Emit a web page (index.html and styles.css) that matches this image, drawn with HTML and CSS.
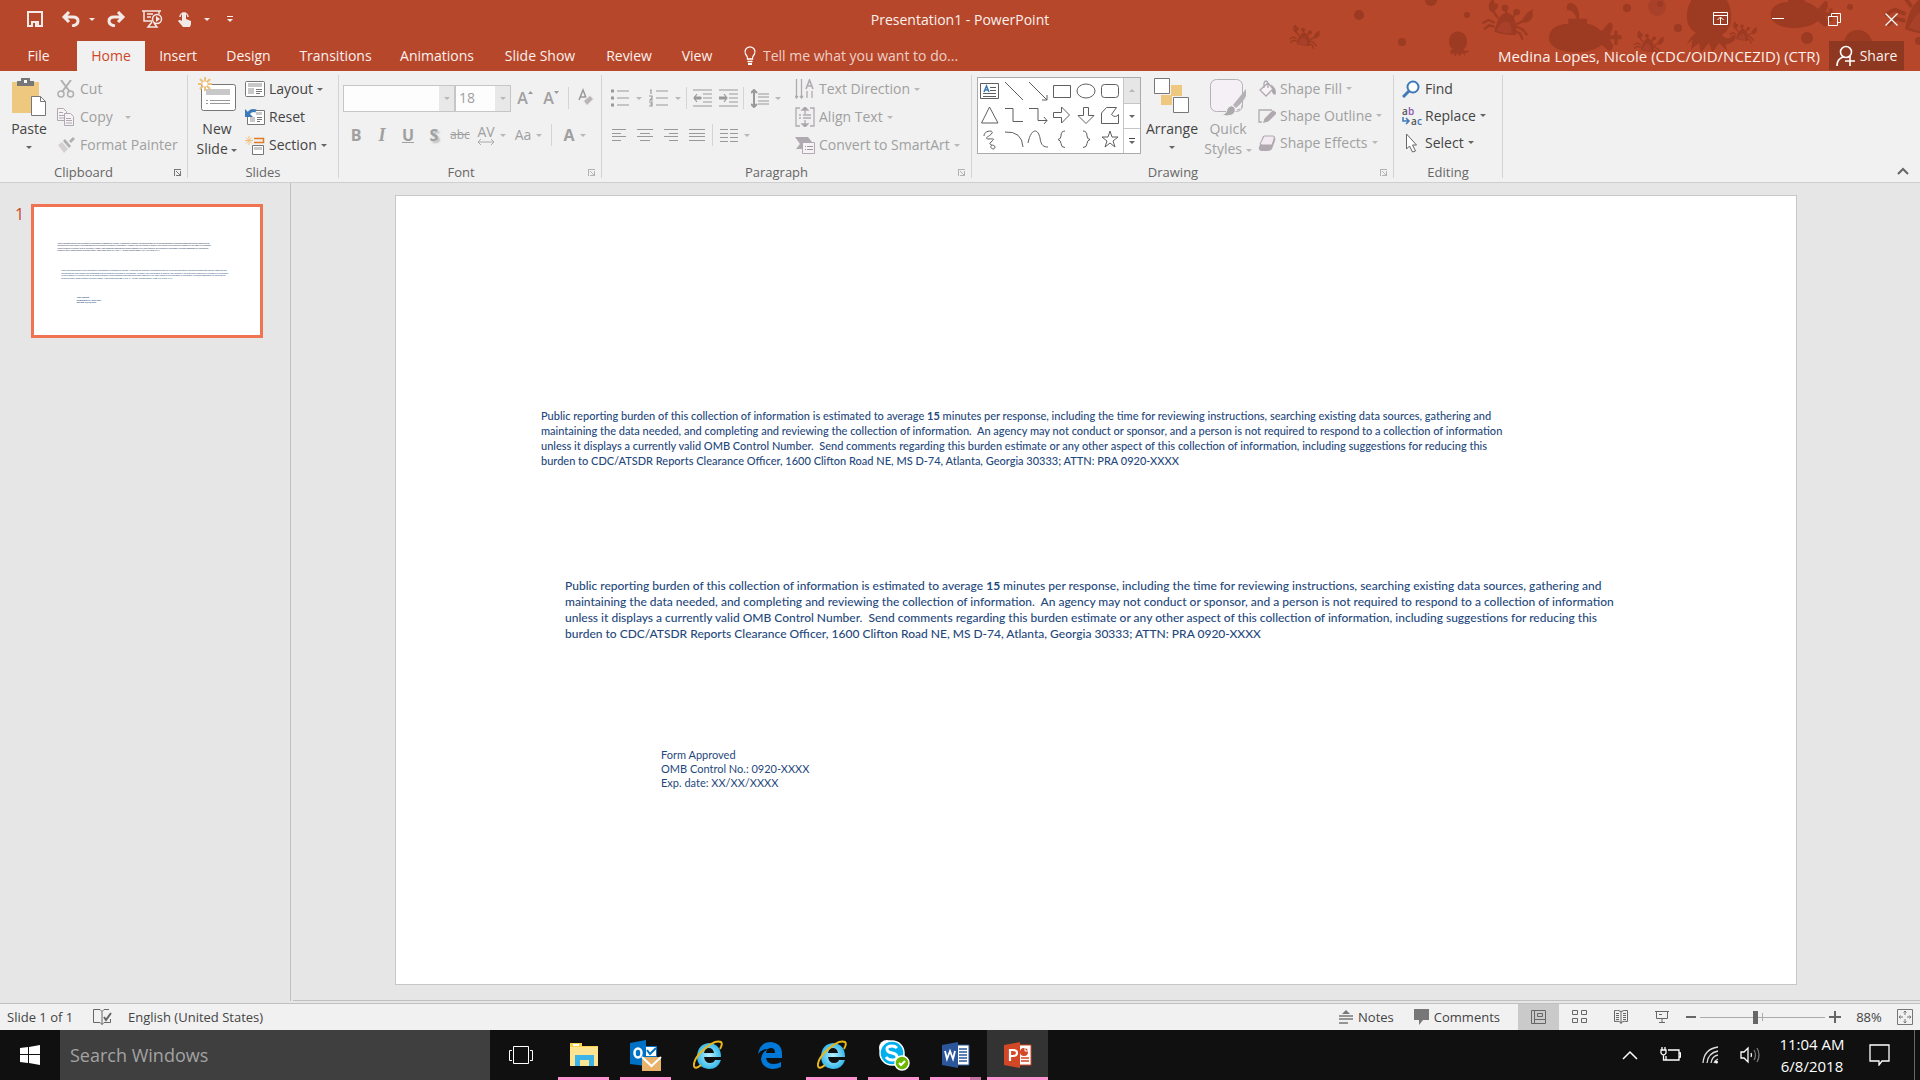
FILE: index.html
```html
<!DOCTYPE html>
<html lang="en">
<head>
  <meta charset="UTF-8" />
  <title>Presentation1 - PowerPoint</title>
  <link rel="stylesheet" href="styles.css">
</head>
<body>
  <header class="header">
    <svg class="art" width="650" height="71" viewBox="1270 0 650 71" fill="#9c3a22" aria-hidden="true">
      <defs>
        <g id="crab">
          <path d="M673 95Q685 38 712 38Q742 45 738 105Q700 105 673 95z"/>
          <path d="M680 92Q695 60 710 64Q728 72 724 101Q700 100 680 92z" fill="#a9412a"/>
          <circle cx="705" cy="24" r="10"/><circle cx="740" cy="36" r="10"/>
          <path d="M658 30Q652 5 670 -2L674 10L684 12Q686 30 664 36zM756 64Q765 38 788 28L788 50Q780 68 762 68z"/>
          <path d="M667 30L685 55M758 64L738 74M707 30L710 45M737 40L728 52M674 68L655 60L637 70M674 80L656 76L642 88M736 78L758 88L772 106M732 92L750 100L758 119" fill="none" stroke="#9c3a22" stroke-width="7"/>
        </g>
        <g id="octopus">
          <path d="M-27 30C-27 -12 27 -12 27 30Q27 46 16 52Q20 60 32 54Q34 62 20 64L22 72L12 62L4 74L0 62L-10 74L-12 62L-22 70L-20 58L-27 64Q-24 56 -16 50Q-27 44 -27 30z"/>
        </g>
        <g id="sub">
          <path d="M-78 0C-78 -30 -50 -42 -20 -43V-58H36V-43Q60 -40 80 -20L102 -46Q116 -50 112 -26L104 -8H118V-22H128V-8H140V4H128V20H118V4H104L114 22Q112 44 98 36L80 20C40 56 -78 50 -78 0z"/>
          <path d="M4 -58Q0 -84 -24 -84Q-28 -104 -14 -106Q14 -100 12 -58z"/>
        </g>
      </defs>
      <use href="#crab" transform="translate(1270) scale(.3333)"/>
      <use href="#crab" transform="translate(1162 25) scale(.2)"/>
      <use href="#crab" transform="translate(1506 31) scale(.2)"/>
      <use href="#crab" transform="translate(1615 22) scale(.18)"/>
      <use href="#crab" transform="translate(1528 -24) scale(.56)"/>
      <use href="#octopus" transform="translate(1458 32) scale(.3333)"/>
      <use href="#octopus" transform="translate(1709 -8) scale(.82)"/>
      <use href="#sub" transform="translate(1575 38) scale(.3333)"/>
      <use href="#sub" transform="translate(1794 15) scale(.3)"/>
      <circle cx="1359" cy="15" r="5"/><circle cx="1431" cy="0" r="6"/><circle cx="1402" cy="42" r="4"/>
      <circle cx="1467" cy="15" r="3"/><circle cx="1627" cy="8" r="4"/><circle cx="1657" cy="7" r="9" fill="#a9412a"/>
      <circle cx="1660" cy="4" r="3"/><circle cx="1678" cy="28" r="4"/><circle cx="1807" cy="38" r="6"/>
      <circle cx="1858" cy="44" r="14"/><circle cx="1850" cy="7" r="3"/><circle cx="1919" cy="41" r="4"/>
    </svg>

    <div class="title-bar">
      <div class="quick-access">
        <button class="qat save" title="Save"><svg width="16" height="16" fill="none" stroke="#f3e9e7" stroke-width="2"><path d="M1 1h14v14H1z"/><path d="M4 15v-5h8v5z" fill="#f3e9e7" stroke="none"/><path d="M6 12h2v4H6z" fill="#b7472a" stroke="none"/></svg></button>
        <button class="qat undo" title="Undo"><svg width="20" height="16" fill="none" stroke="#f3e9e7" stroke-width="3"><path d="M3 6h9q5 0 5 4q0 4-6 5M8 1L3 6l5 5"/></svg><i class="caret"></i></button>
        <button class="qat redo" title="Redo"><svg width="20" height="16" fill="none" stroke="#f3e9e7" stroke-width="3"><path d="M17 6H8q-5 0-5 4q0 4 6 5M12 1l5 5l-5 5"/></svg></button>
        <button class="qat show" title="Start From Beginning"><svg width="21" height="18" fill="none" stroke="#f3e9e7" stroke-width="1.5"><path d="M0 1h19M2 1v10h8M17 1v3M5 4h6M5 7h4M10 12l-4 5h9l-3-4"/><circle cx="15" cy="9" r="4.500"/><path d="M14 6l4 3l-4 3z" fill="#f3e9e7" stroke="none"/></svg></button>
        <button class="qat touch" title="Touch/Mouse Mode"><svg width="14" height="18" fill="#f3e9e7"><path d="M4 4q2-3 4 0v5l5 2v3l-1 3H5L0 11q1-2 4 0z"/><path d="M2 7a4 4 0 1 1 8 0" fill="none" stroke="#f3e9e7" stroke-width="1.500"/></svg><i class="caret"></i></button>
        <button class="qat custom" title="Customize"><i class="bar"></i><i class="caret"></i></button>
      </div>
      <div class="doc-title">Presentation1 - PowerPoint</div>
      <div class="window-buttons">
        <button title="Ribbon Display Options"><svg width="16" height="14" fill="none" stroke="#fff"><path d="M.5.5h14v12H.5zM.5 3.500h14M7.500 12V5.500M4.500 8l3-3l3 3"/></svg></button>
        <button title="Minimize"><svg width="12" height="12" stroke="#fff"><path d="M0 5.500h12"/></svg></button>
        <button title="Restore Down"><svg width="13" height="13" fill="none" stroke="#fff"><path d="M.5 3.500h9v9h-9zM3.500 3V.5h9v9H10"/></svg></button>
        <button title="Close"><svg width="13" height="13" stroke="#fff" stroke-width="1.200"><path d="M.5.5l12 12M12.500.5l-12 12"/></svg></button>
      </div>
    </div>

    <div class="tab-bar">
      <nav class="tabs">
        <a href="#">File</a>
        <a href="#" class="active">Home</a>
        <a href="#">Insert</a>
        <a href="#">Design</a>
        <a href="#">Transitions</a>
        <a href="#">Animations</a>
        <a href="#">Slide Show</a>
        <a href="#">Review</a>
        <a href="#">View</a>
      </nav>
      <label class="tell-me">
        <svg width="14" height="20" fill="none" stroke="#fff" stroke-width="1.300"><path d="M4.500 13q0-3-2-5a5 5 0 1 1 9 0q-2 2-2 5zM4.500 15.500h5"/><path d="M5 18h4" stroke-width="2"/></svg>
        <input type="text" placeholder="Tell me what you want to do..." aria-label="Tell me what you want to do">
      </label>
      <div class="user">Medina Lopes, Nicole (CDC/OID/NCEZID) (CTR)</div>
      <button class="share"><svg width="20" height="22" fill="none" stroke="#fff" stroke-width="1.600"><circle cx="10" cy="7" r="5.500"/><path d="M1 21q0-7 6-9M14 11v10M9 16h10"/></svg>Share</button>
    </div>
  </header>

  <div class="ribbon">
    <section class="group clipboard">
      <div class="group-body">
        <button class="big paste">
          <svg width="36" height="40"><path d="M1 5h27v31H1z" fill="#edc87e"/><path d="M6 4h4V1h9v3h4v5H6z" fill="#777"/><path d="M13 3h3v3h-3z" fill="#fff"/><path d="M20.500 19.500h9l5 5v14h-14z" fill="#fff" stroke="#777"/><path d="M29.500 19.500v5h5" fill="none" stroke="#777"/></svg>
          <span>Paste</span><i class="caret"></i>
        </button>
        <div class="stack">
          <button disabled><svg width="18" height="18" fill="none" stroke="#b0b0b0" stroke-width="1.500"><path d="M4 0l9 12M14 0L5 12" stroke-width="2"/><circle cx="4" cy="14" r="3"/><circle cx="13.500" cy="14" r="3"/></svg>Cut</button>
          <button disabled><svg width="18" height="18" fill="#f6f2f6" stroke="#b0aab0"><path d="M.5.5h6l3 3v9h-9zM2 4.500h4M2 7.500h5M2 10h5"/><path d="M7.500 5.500h6l3 3v9h-9zM9 10.500h5M9 12.500h6M9 15h6"/></svg>Copy<i class="caret far"></i></button>
          <button disabled><svg width="18" height="18" fill="#b0b0b0"><path d="M8 3l6 7l-2 2l-6-7zM12 5l4-4l2 2l-4 4z"/><path d="M5 6l6 7l-4 4L1 9z" fill="#d4d0d4"/></svg>Format Painter</button>
        </div>
      </div>
      <h3>Clipboard</h3><button class="launcher" title="Clipboard"></button>
    </section>

    <section class="group slides">
      <div class="group-body">
        <button class="big">
          <svg width="39" height="40"><rect x="3.500" y="7.500" width="34" height="26" rx="2" fill="#fff" stroke="#777"/><path d="M8 12h24v6H8z" fill="#c8c8c8"/><path d="M8 23.500h2M12 23.500h20M8 26.500h2M12 26.500h20" stroke="#999"/><path d="M7 0v14M0 7h14M2 2l10 10M12 2L2 12" stroke="#edc07c" stroke-width="2"/><circle cx="7" cy="7" r="2.500" fill="#fff"/></svg>
          <span>New</span><span>Slide <i class="caret"></i></span>
        </button>
        <div class="stack">
          <button><svg width="20" height="16" fill="none" stroke="#777"><rect x=".5" y=".5" width="19" height="15" rx="1" fill="#fff"/><path d="M3 2h14v4H3zM3 7h6v6H3z" fill="#c8c8c8" stroke="none"/><path d="M11 8.500h6M11 10.500h6M11 12.500h4"/></svg>Layout<i class="caret"></i></button>
          <button><svg width="20" height="18" fill="none" stroke="#777"><path d="M11 2.500h8.500v14h-17V9" fill="#fff"/><path d="M11 4h6v3h-6zM5 9h5v5H5z" fill="#c8c8c8" stroke="none"/><path d="M12 9.500h5M12 11.500h5M12 13.500h3"/><path d="M3 6q3-5 8-3" stroke="#3f7ab8" stroke-width="3"/><path d="M0 1v8h8z" fill="#3f7ab8" stroke="none"/></svg>Reset</button>
          <button><svg width="20" height="19" fill="none" stroke="#777"><path d="M9 2.500h9.500v4H9" stroke="#e07b28" stroke-width="1.500"/><path d="M7.500 9.500h11v9h-11z" fill="#fff"/><path d="M9 11h8v3H9z" fill="#c8c8c8" stroke="none"/><path d="M4 0v9M0 4.500h8M1 1.500l6 6M7 1.500l-6 6" stroke="#edc07c"/></svg>Section<i class="caret"></i></button>
        </div>
      </div>
      <h3>Slides</h3>
    </section>

    <section class="group font">
      <div class="group-body rows">
        <div class="tool-row">
          <div class="combo name"><input type="text" aria-label="Font" disabled><button disabled title="Font"><i class="caret"></i></button></div>
          <div class="combo size"><input type="text" value="18" aria-label="Font size" disabled><button disabled title="Font size"><i class="caret"></i></button></div>
          <button class="tool" disabled title="Increase Font Size"><b class="grow">A</b><svg width="5" height="16" fill="#999"><path d="M0 4l2.500-3L5 4z"/></svg></button>
          <button class="tool" disabled title="Decrease Font Size"><b class="grow">A</b><svg width="5" height="16" fill="#999"><path d="M0 1h5L2.500 4z"/></svg></button>
          <i class="divider"></i>
          <button class="tool" disabled title="Clear All Formatting"><svg width="16" height="20" fill="none" stroke="#999" stroke-width="1.500"><path d="M1 12L5 2l4 10M2 9h5"/><path d="M5 13l7-6l4 4l-7 7z" fill="#b9b5b9" stroke="#eee"/></svg></button>
        </div>
        <div class="tool-row">
          <button class="tool" disabled title="Bold"><b>B</b></button>
          <button class="tool" disabled title="Italic"><em>I</em></button>
          <button class="tool" disabled title="Underline"><u>U</u></button>
          <button class="tool" disabled title="Text Shadow"><b class="shadow">S</b></button>
          <button class="tool" disabled title="Strikethrough"><s>abc</s></button>
          <button class="tool wide" disabled title="Character Spacing"><span class="spacing">AV<svg width="18" height="6" fill="none" stroke="#aaa"><path d="M1 3h16M4 0L1 3l3 3M14 0l3 3l-3 3"/></svg></span><i class="caret"></i></button>
          <button class="tool wide" disabled title="Change Case">Aa<i class="caret"></i></button>
          <i class="divider"></i>
          <button class="tool wide" disabled title="Font Color"><b class="color">A</b><i class="caret"></i></button>
        </div>
      </div>
      <h3>Font</h3><button class="launcher" disabled title="Font"></button>
    </section>

    <section class="group paragraph">
      <div class="group-body">
        <div class="rows">
          <div class="tool-row">
            <button class="tool list" disabled title="Bullets"><svg width="20" height="18" stroke="#999" stroke-width="1.200"><path d="M7 2h12M7 9h12M7 16h12"/><path d="M1 2h3M1 9h3M1 16h3" stroke-width="3"/></svg><i class="caret"></i></button>
            <button class="tool list" disabled title="Numbering"><svg width="20" height="18" fill="none" stroke="#999" stroke-width="1.200"><path d="M7 2h12M7 9h12M7 16h12M1 1h1v4M0 7h3v2l-2 2h3M0 13h3v4H0M1 15h2"/></svg><i class="caret"></i></button>
            <i class="divider"></i>
            <button class="tool" disabled title="Decrease List Level"><svg width="19" height="18" stroke="#999" stroke-width="1.200"><path d="M0 1h19M10 5h9M10 9h9M10 13h9M0 17h19M1 9h8M4 5L1 9l3 4" fill="none"/><path d="M1 9h7" stroke-width="3"/></svg></button>
            <button class="tool" disabled title="Increase List Level"><svg width="19" height="18" stroke="#999" stroke-width="1.200"><path d="M0 1h19M10 5h9M10 9h9M10 13h9M0 17h19M5 5l3 4l-3 4" fill="none"/><path d="M0 9h7" stroke-width="3"/></svg></button>
            <i class="divider"></i>
            <button class="tool list" disabled title="Line Spacing"><svg width="18" height="19" stroke="#999" fill="none" stroke-width="1.200"><path d="M7 5h11M7 8h11M7 12h11M7 15h11"/><path d="M3 1v17M0 4l3-3l3 3M0 15l3 3l3-3" stroke-width="2"/></svg><i class="caret"></i></button>
          </div>
          <div class="tool-row">
            <button class="tool" disabled title="Align Left"><svg width="16" height="14" stroke="#999"><path d="M1 1.500h14M1 5.500h9M1 8.500h14M1 12.500h9"/></svg></button>
            <button class="tool" disabled title="Center"><svg width="16" height="14" stroke="#999"><path d="M0 1.500h16M3 5.500h10M0 8.500h16M3 12.500h10"/></svg></button>
            <button class="tool" disabled title="Align Right"><svg width="16" height="14" stroke="#999"><path d="M1 1.500h14M6 5.500h9M1 8.500h14M6 12.500h9"/></svg></button>
            <button class="tool" disabled title="Justify"><svg width="16" height="14" stroke="#999"><path d="M0 1.500h16M0 5.500h16M0 8.500h16M0 12.500h16"/></svg></button>
            <i class="divider"></i>
            <button class="tool list" disabled title="Columns"><svg width="18" height="15" stroke="#999"><path d="M0 1.500h8M0 5.500h8M0 9.500h8M0 13.500h8M10 1.500h8M10 5.500h8M10 9.500h8M10 13.500h8"/></svg><i class="caret"></i></button>
          </div>
        </div>
        <div class="stack">
          <button disabled><svg width="20" height="20" fill="none" stroke="#b0aab0" stroke-width="1.300"><path d="M1.500 0v19M6.500 0v19M12 12v7M17 12v7M0 17l1.500 2L3 17M5 17l1.500 2L8 17"/><path d="M11 10l3.500-9l3.500 9M12 7h5" stroke-width="1.600"/></svg>Text Direction<i class="caret"></i></button>
          <button disabled><svg width="20" height="20" fill="none" stroke="#b0aab0" stroke-width="1.300"><path d="M5 1H1v18h4M15 1h4v18h-4M4 8h2M8 8h8M4 11h2M8 11h8M10 0v7M10 13v7"/><path d="M7 3l3-3l3 3zM7 17l3 3l3-3z" fill="#999"/></svg>Align Text<i class="caret"></i></button>
          <button disabled><svg width="20" height="19" fill="#b0aab0"><path d="M0 1h13l4 5H9v7H1l4-5z"/><path d="M7.500 6.500h12v11h-12z" fill="#f6f2f6" stroke="#b0aab0"/><path d="M10 10.500h1M12 10.500h6M10 13.500h1M12 13.500h6" stroke="#999"/></svg>Convert to SmartArt<i class="caret"></i></button>
        </div>
      </div>
      <h3>Paragraph</h3><button class="launcher" disabled title="Paragraph"></button>
    </section>

    <section class="group drawing">
      <div class="group-body">
        <div class="gallery">
          <svg width="145" height="74" fill="none" stroke="#5f5f5f">
            <path d="M2.500 5.500h18v15h-18zM12 9.500h6M12 12.500h6M5 15.500h13M5 18.500h13"/><path d="M6 14l2.500-6L11 14M7 12h3" stroke="#3f7ab8" stroke-width="1.500"/>
            <path d="M27 4l18 18M51 4l18 18M69 17v5h-5"/><path d="M75.500 7.500h17v12h-17z"/><ellipse cx="108" cy="13" rx="9" ry="7"/><rect x="123.500" y="6.500" width="17" height="13" rx="3"/>
            <path d="M11.500 29L20 45H3.500zM27 30.500h8v13h10M51 30.500h9v12h9M66 39l3 3.500l-3 3.500M75.500 34.500h8V29l8 8l-8 8v-5.500h-8zM105.500 29.500h5v8h5.500l-8 8l-8-8h5.500zM123.500 45.500V35l5-5.500h10l-5 7q4 4 7 0v9z"/>
            <path d="M6 58c0-6 10-6 8-3c-1 3-9 5-4 6c5 0 8-1 3 3c-4 4 4 2 4 5c0 4-7 1-3-2M27 54q17-1 18 15M50 65c3-15 10-15 12-5c1 8 4 9 8 9M87 53q-4 0-4 5q0 3-3 3.500q3 1 3 4q0 4 4 4M105 53q4 0 4 5q0 3 3 3.500q-3 1-3 4q0 4-4 4M132 53l2 6h6l-5 4l2 6l-5-4l-5 4l2-6l-5-4h6z"/>
          </svg>
          <div class="gallery-nav"><button disabled title="Row up"><i class="caret up"></i></button><button title="Row down"><i class="caret"></i></button><button title="More"><i class="bar"></i><i class="caret"></i></button></div>
        </div>
        <button class="big arrange">
          <svg width="36" height="40"><path d="M17 8h11v11H17zM7 18h11v10H7z" fill="#edc87e"/><path d="M.5 1.500h15v15H.5zM19.500 20.500h15v15h-15z" fill="#fff" stroke="#777"/></svg>
          <span>Arrange</span><i class="caret"></i>
        </button>
        <button class="big quick" disabled>
          <svg width="38" height="40"><rect x="1.500" y="2.500" width="32" height="32" rx="6" fill="#f5f0f6" stroke="#b5b1b5"/><path d="M37 12L24 28l3 3q8-7 10-12z" fill="#b5b1b5"/><path d="M12 38q6-1 6-6q4-6 8-1q2 7-8 8z" fill="#aaa" stroke="#f5f0f6"/><path d="M28 33q6-1 5-7" fill="none" stroke="#aaa" stroke-dasharray="3 2"/></svg>
          <span>Quick</span><span>Styles <i class="caret"></i></span>
        </button>
        <div class="stack tight">
          <button disabled><svg width="18" height="18" fill="#f6f2f6" stroke="#b0aab0" stroke-width="1.300"><path d="M2 10l8-7l5 6l-7 7zM6 8V3q2-4 4 0v5"/><path d="M14 6q4 3 3 8q-3 0-2-5z" fill="#999"/></svg>Shape Fill<i class="caret"></i></button>
          <button disabled><svg width="18" height="18" fill="none" stroke="#b0aab0" stroke-width="1.300"><path d="M14 3H1v12h3"/><path d="M7 12l8-8l3 2l-8 8l-4 1z" fill="#b0aab0"/></svg>Shape Outline<i class="caret"></i></button>
          <button disabled><svg width="18" height="18"><path d="M5 2h11q2 1 1 5l-3 8q-2 2-4 2H3q-3-1-2-4z" fill="#b0aab0"/><path d="M6 2h9q2 0 1 3l-2 6H4L2 10z" fill="#f2ecf2" stroke="#b0aab0"/></svg>Shape Effects<i class="caret"></i></button>
        </div>
      </div>
      <h3>Drawing</h3><button class="launcher" disabled title="Drawing"></button>
    </section>

    <section class="group editing">
      <div class="group-body">
        <div class="stack tight">
          <button><svg width="18" height="18" fill="#fff" stroke="#3f7ab8" stroke-width="2"><circle cx="11" cy="7" r="5.500"/><path d="M7 11l-6 6" stroke-width="3"/></svg>Find</button>
          <button><svg width="22" height="26" class="ab"><text x="0" y="12" fill="#555">a</text><text x="6" y="12" fill="#8a58b0">b</text><text x="9" y="22" fill="#555">a</text><text x="15" y="22" fill="#3f7ab8">c</text><path d="M1 14v4h6M4 15l3 3l-3 3" fill="none" stroke="#3f7ab8" stroke-width="1.500"/></svg>Replace<i class="caret far"></i></button>
          <button><svg width="18" height="20" fill="#fff" stroke="#666"><path d="M4.500 1v15l3-3l3 6l3-1l-3-6h4z"/></svg>Select<i class="caret"></i></button>
        </div>
      </div>
      <h3>Editing</h3>
    </section>
    <button class="collapse" title="Collapse the Ribbon"><svg width="12" height="8" fill="none" stroke="#666" stroke-width="2"><path d="M1 7l5-5l5 5"/></svg></button>
  </div>

  <main class="workspace">
    <aside class="thumbs">
      <span class="thumb-number">1</span>
      <svg class="thumb" viewBox="0 0 1400 788" role="img" aria-label="Slide 1">
        <g class="thumb-text dark">
          <text x="145" y="226">Public reporting burden of this collection of information is estimated to average 15 minutes per response, including the time for reviewing instructions, searching existing data sources, gathering and</text>
          <text x="145" y="241">maintaining the data needed, and completing and reviewing the collection of information. An agency may not conduct or sponsor, and a person is not required to respond to a collection of information</text>
          <text x="145" y="256">unless it displays a currently valid OMB Control Number. Send comments regarding this burden estimate or any other aspect of this collection of information, including suggestions for reducing this</text>
          <text x="145" y="271">burden to CDC/ATSDR Reports Clearance Officer, 1600 Clifton Road NE, MS D-74, Atlanta, Georgia 30333; ATTN: PRA 0920-XXXX</text>
        </g>
        <g class="thumb-text large">
          <text x="169" y="395">Public reporting burden of this collection of information is estimated to average 15 minutes per response, including the time for reviewing instructions, searching existing data sources, gathering and</text>
          <text x="169" y="411">maintaining the data needed, and completing and reviewing the collection of information. An agency may not conduct or sponsor, and a person is not required to respond to a collection of information</text>
          <text x="169" y="427">unless it displays a currently valid OMB Control Number. Send comments regarding this burden estimate or any other aspect of this collection of information, including suggestions for reducing this</text>
          <text x="169" y="443">burden to CDC/ATSDR Reports Clearance Officer, 1600 Clifton Road NE, MS D-74, Atlanta, Georgia 30333; ATTN: PRA 0920-XXXX</text>
        </g>
        <g class="thumb-text strong">
          <text x="265" y="564">Form Approved</text>
          <text x="265" y="578">OMB Control No.: 0920-XXXX</text>
          <text x="265" y="592">Exp. date: XX/XX/XXXX</text>
        </g>
      </svg>
    </aside>
    <div class="stage">
      <article class="slide">
        <p class="text-box burden">Public reporting burden of this collection of information is estimated to average <b>15</b> minutes per response, including the time for reviewing instructions, searching existing data sources, gathering and<br>
        maintaining the data needed, and completing and reviewing the collection of information.&nbsp; An agency may not conduct or sponsor, and a person is not required to respond to a collection of information<br>
        unless it displays a currently valid OMB Control Number.&nbsp; Send comments regarding this burden estimate or any other aspect of this collection of information, including suggestions for reducing this<br>
        burden to CDC/ATSDR Reports Clearance Officer, 1600 Clifton Road NE, MS D-74, Atlanta, Georgia 30333; ATTN: PRA 0920-XXXX</p>
        <p class="text-box burden-large">Public reporting burden of this collection of information is estimated to average <b>15</b> minutes per response, including the time for reviewing instructions, searching existing data sources, gathering and<br>
        maintaining the data needed, and completing and reviewing the collection of information.&nbsp; An agency may not conduct or sponsor, and a person is not required to respond to a collection of information<br>
        unless it displays a currently valid OMB Control Number.&nbsp; Send comments regarding this burden estimate or any other aspect of this collection of information, including suggestions for reducing this<br>
        burden to CDC/ATSDR Reports Clearance Officer, 1600 Clifton Road NE, MS D-74, Atlanta, Georgia 30333; ATTN: PRA 0920-XXXX</p>
        <p class="text-box approval">Form Approved<br>OMB Control No.: 0920-XXXX<br>Exp. date: XX/XX/XXXX</p>
      </article>
    </div>
  </main>

  <footer class="status-bar">
    <span class="slide-count">Slide 1 of 1</span>
    <button class="proof" title="Spelling"><svg width="19" height="17" fill="none" stroke="#666"><path d="M9 2.500L7 .5H.5v13H7l2 2l2-2h6.500V10M9 2.500v13M9 2.500l2-2h5"/><path d="M11 8l2 3l5-7" stroke-width="2"/></svg></button>
    <button class="language">English (United States)</button>
    <button class="notes"><svg width="14" height="14" stroke="#777" stroke-width="1.500"><path d="M3 4l4-4l4 4z" fill="#777" stroke="none"/><path d="M0 6h14M0 9h14M0 13h9"/></svg>Notes</button>
    <button class="comments"><svg width="15" height="16" fill="#777"><path d="M0 0h15v11H9l-4 5v-5H0z"/></svg>Comments</button>
    <button class="view active" title="Normal"><svg width="15" height="14" fill="none" stroke="#666"><path d="M.5.5h14v13H.5zM3.500.5v13M6.500 3.500h5v3h-5zM3.500 9.500h11"/></svg></button>
    <button class="view" title="Slide Sorter"><svg width="15" height="14" fill="none" stroke="#666"><path d="M.5.5h5v4h-5zM9.500.5h5v4h-5zM.5 8.500h5v4h-5zM9.500 8.500h5v4h-5z"/></svg></button>
    <button class="view" title="Reading View"><svg width="14" height="14" fill="none" stroke="#666"><path d="M7 1.500q-3-2-6.500-1v11q4-1 6.500 1q3-2 6.500-1V.5Q10 0 7 1.500zM7 1v13M2 3.500h3M2 5.500h3M2 7.500h3M2 9.500h3M9 3.500h3M9 5.500h3M9 7.500h3M9 9.500h3"/></svg></button>
    <button class="view" title="Slide Show"><svg width="14" height="14" fill="none" stroke="#666"><path d="M0 1.500h14M1.500 2v6.500h11V2M7 9v4M4 12.500h6M4 4.500h3" /></svg></button>
    <div class="zoom">
      <button title="Zoom Out"><svg width="10" height="12" stroke="#666" stroke-width="2"><path d="M0 6h10"/></svg></button>
      <input type="range" min="0" max="100" value="44" aria-label="Zoom">
      <button title="Zoom In"><svg width="12" height="12" stroke="#666" stroke-width="2"><path d="M0 6h12M6 0v12"/></svg></button>
    </div>
    <button class="percent">88%</button>
    <button class="fit" title="Fit slide to window"><svg width="16" height="16" fill="none" stroke="#777"><path d="M.5.5h15v15H.5zM8 2v4M8 10v4M2 8h4M10 8h4M6.500 3.500L8 2l1.500 1.500M6.500 12.500L8 14l1.500-1.500M3.500 6.500L2 8l1.500 1.500M12.500 6.500L14 8l-1.500 1.500"/></svg></button>
  </footer>

  <div class="taskbar">
    <button class="start" title="Start"><svg width="20" height="20" fill="#fff"><path d="M0 3l8-1v7H0zM9 2l11-2v9H9zM0 10h8v8l-8-1zM9 10h11v10L9 18z"/></svg></button>
    <input class="search" type="text" placeholder="Search Windows" aria-label="Search Windows">
    <nav class="apps">
      <button title="Task View"><svg width="24" height="18" fill="none" stroke="#fff"><path d="M4.500.5h15v17h-15zM3 4.500H.5v10H3M21 4.500h2.500v10H21"/></svg></button>
      <button class="running" title="File Explorer"><svg width="28" height="24"><path d="M0 0h12v3H28v20H0z" fill="#f9d34d"/><path d="M0 4h28v19H0z" fill="#fde492"/><path d="M3 1h6v2H3z" fill="#fff"/><path d="M5 23V12h19v11h-5v-6h-9v6z" fill="#3cb4e7"/></svg></button>
      <button class="running" title="Outlook"><svg width="32" height="32"><path d="M14 7h13v12H14z" fill="#0072c6"/><path d="M16 8h10v9H16z" fill="#fff"/><path d="M17 11l3 4l6-6" fill="none" stroke="#0072c6" stroke-width="2"/><path d="M0 4l16-3v26L0 25z" fill="#0072c6"/><ellipse cx="8" cy="14" rx="3.500" ry="4.500" fill="none" stroke="#fff" stroke-width="2.500"/><path d="M12 18h19v14H12z" fill="#e8b26b"/><path d="M12 18l9.500 9l9.500-9" fill="none" stroke="#fff" stroke-width="2"/></svg></button>
      <button title="Internet Explorer"><svg width="30" height="30"><defs><radialGradient id="ie"><stop offset="0" stop-color="#b9f0ff"/><stop offset="1" stop-color="#38b9ea"/></radialGradient></defs><path d="M28 17H11q1 6 6 6q4 0 5-3h6q-3 9-12 9q-12-1-12-13Q5 4 16 3q12 1 12 14zM11 13h10q-1-5-5-5t-5 5z" fill="url(#ie)"/><path d="M8 25Q2 30 1 26Q0 20 9 11Q22-1 28 2q2 2-1 7" fill="none" stroke="#e9b71c" stroke-width="2"/></svg></button>
      <button title="Microsoft Edge"><svg width="26" height="28"><path d="M1 13Q3 1 14 1q11 1 11 12v4H9q1 6 8 6q4 0 7-2v5q-4 2-9 2Q5 27 4 18q0-6 7-10Q4 8 1 13zM9 12h9q0-5-4-5t-5 5z" fill="#0078d7"/></svg></button>
      <button class="running" title="Internet Explorer"><svg width="30" height="30"><path d="M28 17H11q1 6 6 6q4 0 5-3h6q-3 9-12 9q-12-1-12-13Q5 4 16 3q12 1 12 14zM11 13h10q-1-5-5-5t-5 5z" fill="url(#ie)"/><path d="M8 25Q2 30 1 26Q0 20 9 11Q22-1 28 2q2 2-1 7" fill="none" stroke="#e9b71c" stroke-width="2"/></svg></button>
      <button class="running" title="Skype for Business"><svg width="32" height="32"><circle cx="9" cy="9" r="8" fill="#fff"/><circle cx="19" cy="19" r="8" fill="#fff"/><circle cx="14" cy="14" r="12" fill="#00aff0" stroke="#fff" stroke-width="1.500"/><path d="M19 9q-2-2-5-2q-5 0-5 3q0 3 5 4q5 1 5 4q0 3-5 3q-4 0-6-3" fill="none" stroke="#fff" stroke-width="3"/><circle cx="24" cy="24" r="7" fill="#6bb700" stroke="#fff" stroke-width="1.500"/><path d="M21 24l2 2l4-4" fill="none" stroke="#fff" stroke-width="2"/></svg></button>
      <button class="running many" title="Word"><svg width="28" height="28"><path d="M14 4h13v20H14z" fill="#fff" stroke="#2b579a"/><path d="M17 8h8M17 11h8M17 14h8M17 17h8M17 20h8" stroke="#2b579a" stroke-width="1.500"/><path d="M0 4l16-3v26L0 24z" fill="#2b579a"/><path d="M3 10l2 8l3-8l3 8l2-8" fill="none" stroke="#fff" stroke-width="1.800"/></svg></button>
      <button class="running current" title="PowerPoint"><svg width="28" height="28"><path d="M14 4h13v20H14z" fill="#fff" stroke="#d24726"/><path d="M17 17h8M17 20h8" stroke="#d24726" stroke-width="1.500"/><circle cx="20" cy="11" r="4" fill="#d24726"/><path d="M21 6v4h4" stroke="#fff" fill="none"/><path d="M0 4l16-3v26L0 24z" fill="#d24726"/><path d="M6 20V9h3q4 0 4 3t-4 3H6" fill="none" stroke="#fff" stroke-width="2.200"/></svg></button>
    </nav>
    <div class="tray">
      <button title="Show hidden icons"><svg width="16" height="10" fill="none" stroke="#fff" stroke-width="1.500"><path d="M1 9l7-7l7 7"/></svg></button>
      <button title="Battery"><svg width="21" height="16" fill="none" stroke="#fff" stroke-width="1.300"><path d="M8 3h11v10H6V9M19 6h1.500v4H19M1 3h5v3q-1 2-2.500 2T1 6zM2 0v3M5 0v3M3.500 8v5H7"/></svg></button>
      <button title="Network"><svg width="17" height="18" fill="none" stroke="#ddd" stroke-width="1.300"><path d="M1 17Q2 3 16 1M5 17Q6 7 16 5M9 17q1-7 7-8M12 17q1-3 4-4"/><circle cx="14.500" cy="16" r="1.500" fill="#fff" stroke="none"/></svg></button>
      <button title="Volume"><svg width="21" height="18" fill="none" stroke="#fff" stroke-width="1.300"><path d="M1 6h3l4-4v14l-4-4H1zM11 7q1 2 0 4"/><path d="M14 4q3 5 0 10M17 2q4 7 0 14" stroke="#777"/></svg></button>
      <button class="clock"><span>11:04 AM</span><span>6/8/2018</span></button>
      <button title="Action Center"><svg width="21" height="22" fill="none" stroke="#fff" stroke-width="1.300"><path d="M1 1h19v16h-7l-3 4v-4H1z"/></svg></button>
    </div>
    <button class="show-desktop" title="Show desktop"></button>
  </div>
</body>
</html>
```
FILE: styles.css
```css
* {
  box-sizing: border-box;
}
body {
  margin: 0;
  min-height: 100vh;
  display: flex;
  flex-direction: column;
  background: #e6e6e6;
  color: #444;
  font-family: "Open Sans", "Noto Sans", sans-serif;
  font-size: 14px;
  line-height: 20px;
}
button, input {
  margin: 0;
  padding: 0;
  border: 0;
  background: none;
  color: inherit;
  font: inherit;
}
button {
  display: flex;
  align-items: center;
  justify-content: center;
  white-space: nowrap;
}
svg {
  display: block;
  flex: none;
}
a {
  color: inherit;
  text-decoration: none;
}
.caret {
  display: inline-block;
  flex: none;
  border: 3px solid transparent;
  border-top-color: currentColor;
  border-bottom: 0;
}
.caret.up {
  border-top: 0;
  border-bottom: 3px solid currentColor;
}
.bar {
  width: 6px;
  height: 1px;
  margin-bottom: 2px;
  background: currentColor;
}

/* title bar and tabs */
.header {
  position: relative;
  background: #b7472a;
  color: #fbf1ee;
}
.art {
  position: absolute;
  top: 0;
  right: 0;
}
.title-bar, .tab-bar {
  position: relative;
  display: flex;
}
.title-bar {
  height: 41px;
  display: grid;
  grid-template-columns: 1fr auto 1fr;
}
.quick-access {
  display: flex;
  align-items: center;
  height: 38px;
  padding-left: 20px;
}
.qat {
  width: 36px;
  gap: 8px;
}
.qat.save { width: 30px; }
.qat.undo { width: 56px; }
.qat.redo { width: 20px; }
.qat.show { width: 52px; }
.qat.touch { width: 32px; gap: 12px; }
.qat.custom {
  flex-direction: column;
  gap: 0;
  width: 12px;
  margin-left: 14px;
}
.doc-title {
  line-height: 40px;
}
.window-buttons {
  display: flex;
  justify-content: flex-end;
  height: 38px;
}
.window-buttons button {
  width: 57px;
}
.tab-bar {
  height: 30px;
  line-height: 30px;
}
.tabs {
  display: grid;
  grid-template-columns: 77px 68px 66px 75px 99px 104px 102px 76px 60px;
  text-align: center;
}
.tabs .active {
  background: #f1f1f1;
  color: #d04727;
}
.tell-me {
  display: flex;
  align-items: center;
  gap: 6px;
  width: 240px;
  margin-left: 16px;
}
.tell-me input {
  flex: 1;
  min-width: 0;
}
.tell-me input::placeholder {
  color: #eecfc7;
}
.user {
  margin-left: auto;
  font-size: 15px;
}
.share {
  gap: 4px;
  width: 75px;
  height: 29px;
  margin: 0 16px 0 9px;
  background: #8f3821;
}

/* ribbon */
.ribbon {
  display: flex;
  height: 112px;
  padding: 4px 0;
  background: #f1f1f1;
  border-bottom: 1px solid #cfcfcf;
}
.group {
  position: relative;
  display: flex;
  flex-direction: column;
  border-right: 1px solid #d4d4d4;
}
.group-body {
  display: flex;
  flex: none;
  height: 87px;
}
.group h3 {
  margin: 0;
  color: #666;
  font-size: 13px;
  font-weight: 400;
  line-height: 20px;
  text-align: center;
}
.clipboard { width: 188px; padding-left: 6px; }
.clipboard h3 { padding-right: 26px; }
.slides { width: 151px; padding-left: 6px; }
.slides h3 { padding-right: 6px; }
.font { width: 263px; padding-left: 4px; }
.font h3 { padding-right: 22px; }
.paragraph { width: 370px; padding-left: 4px; }
.paragraph h3 { padding-right: 24px; }
.drawing { width: 422px; padding-left: 5px; }
.drawing h3 { padding-right: 24px; }
.editing { width: 109px; padding-left: 8px; }
.editing h3 { padding-right: 8px; }
.launcher {
  position: absolute;
  right: 6px;
  bottom: 2px;
  width: 7px;
  height: 7px;
  border-top: 1px solid #777;
  border-left: 1px solid #777;
}
.launcher::after {
  content: "";
  width: 4px;
  height: 4px;
  border-right: 1px solid #777;
  border-bottom: 1px solid #777;
  background: linear-gradient(45deg, transparent 40%, #777 40%, #777 60%, transparent 60%);
}
.ribbon button:disabled {
  color: #a0a0a0;
}
.ribbon button:disabled .caret {
  color: #b8b8b8;
}
.launcher:disabled {
  opacity: 0.5;
}
.caret {
  color: #666;
}
.header .caret {
  color: #f3e9e7;
}
.big {
  flex-direction: column;
  justify-content: flex-start;
  width: 46px;
  padding-top: 2px;
}
.big svg {
  margin-bottom: 2px;
}
.big > .caret {
  margin-top: 7px;
}
.big .caret {
  vertical-align: middle;
}
.stack {
  display: grid;
  grid-auto-rows: 28px;
  align-content: start;
  justify-items: start;
}
.stack.tight {
  grid-auto-rows: 27px;
}
.stack button {
  gap: 4px;
}
.clipboard .stack {
  margin-left: 5px;
}
.clipboard .stack button {
  gap: 5px;
}
.stack .far {
  margin-left: 7px;
}
.slides .big {
  margin-right: 5px;
}
.rows {
  display: flex;
  flex-direction: column;
  gap: 9px;
  padding-top: 9px;
}
.tool-row {
  display: flex;
  align-items: center;
  height: 28px;
}
.tool {
  width: 26px;
  height: 28px;
}
.tool.wide {
  width: 37px;
  gap: 5px;
}
.tool.list {
  width: 39px;
  gap: 6px;
}
.tool b, .tool u {
  font-size: 16px;
  font-weight: 700;
}
.tool em {
  font-family: "Liberation Serif", serif;
  font-size: 18px;
  font-weight: 700;
}
.tool s {
  font-size: 12px;
}
.tool .grow {
  font-weight: 600;
}
.shadow {
  text-shadow: 2px 2px 2px #bbb;
}
.spacing {
  line-height: 14px;
}
.divider {
  width: 1px;
  height: 22px;
  margin: 0 4px;
  background: #d4d4d4;
}
.combo {
  display: flex;
  height: 27px;
  border: 1px solid #c6c6c6;
  background: #fdfdfd;
}
.combo.name {
  width: 112px;
}
.combo.size {
  width: 56px;
  margin-right: 1px;
}
.combo input {
  flex: 1;
  min-width: 0;
  padding-left: 3px;
  color: #a0a0a0;
}
.combo button {
  width: 15px;
  background: #e8e8e8;
}
.paragraph .rows {
  width: 189px;
}
.paragraph .divider {
  margin: 0 2px;
}
.gallery {
  display: flex;
  width: 164px;
  height: 77px;
  margin-top: 2px;
  border: 1px solid #ababab;
  background: #fff;
}
.gallery-nav {
  display: grid;
  grid-template-rows: repeat(3, 1fr);
  flex: 1;
  border-left: 1px solid #c6c6c6;
}
.gallery-nav button {
  flex-direction: column;
  border-top: 1px solid #c6c6c6;
}
.gallery-nav button:disabled {
  border: 0;
  background: #e6e6e6;
}
.arrange {
  width: 62px;
}
.quick {
  width: 50px;
}
.drawing .stack {
  margin-left: 5px;
}
.ab {
  font-size: 10px;
  font-weight: 600;
}
.editing .stack svg {
  width: 22px;
}
.editing .stack button {
  gap: 1px;
}
.editing .caret {
  margin-left: 3px;
}
.collapse {
  align-self: flex-end;
  margin: 0 11px 3px auto;
}

/* slide area */
.workspace {
  flex: 1;
  display: flex;
  border-bottom: 1px solid #c0c0c0;
}
.thumbs {
  display: flex;
  align-items: flex-start;
  width: 291px;
  padding: 21px 27px 0 15px;
  margin-bottom: 2px;
  border-right: 1px solid #c0c0c0;
}
.thumb-number {
  width: 16px;
  color: #d04727;
  font-size: 16px;
}
.thumb {
  flex: 1;
  height: 134px;
  border: 3px solid #f07352;
  background: #fff;
}
.thumb-text {
  fill: #1f497d;
  font-family: Lato, sans-serif;
  font-size: 11px;
}
.thumb-text.dark { fill: #222b52; }
.thumb-text.large { font-size: 12px; }
.thumb-text.strong {
  font-weight: 900;
}
.stage {
  flex: 1;
  margin: 0 0 2px 2px;
  padding: 12px 123px 15px 102px;
  border-bottom: 1px solid #c0c0c0;
}
.slide {
  position: relative;
  height: 100%;
  border: 1px solid #c6c6c6;
  background: #fff;
  color: #1f497d;
  font-family: Lato, "Liberation Sans", sans-serif;
}
.text-box {
  position: absolute;
  margin: 0;
  white-space: nowrap;
}
.burden {
  top: 212px;
  left: 145px;
  font-size: 11px;
  line-height: 15px;
  font-weight: 500;
}
.burden-large {
  top: 382px;
  left: 169px;
  font-size: 12px;
  line-height: 16px;
  font-weight: 500;
}
.approval {
  top: 552px;
  left: 265px;
  font-size: 11px;
  line-height: 14px;
}

/* status bar */
.status-bar {
  display: flex;
  align-items: center;
  height: 26px;
  padding-left: 7px;
  background: #f1f1f1;
  font-size: 13px;
}
.status-bar button {
  height: 26px;
  gap: 5px;
}
.slide-count { width: 86px; }
.proof { width: 19px; }
.language { margin-left: 16px; }
.notes { margin-left: auto; }
.comments { margin: 0 18px 0 20px; }
.view {
  width: 41px;
}
.view.active {
  background: #cacaca;
}
.zoom {
  display: flex;
  align-items: center;
  gap: 4px;
  margin-left: 4px;
}
.zoom input {
  appearance: none;
  width: 125px;
  height: 12px;
  background: linear-gradient(#aaa, #aaa) center / 100% 1px no-repeat, linear-gradient(#aaa, #aaa) center / 1px 8px no-repeat;
}
.zoom input::-webkit-slider-thumb {
  appearance: none;
  width: 5px;
  height: 13px;
  background: #666;
}
.percent {
  width: 56px;
}
.fit {
  margin-right: 7px;
}

/* windows taskbar */
.taskbar {
  display: flex;
  height: 50px;
  background: #101010;
  color: #fff;
}
.start {
  width: 60px;
}
.search {
  width: 430px;
  padding-left: 10px;
  background: #3f3f3f;
  font-size: 18px;
}
.search::placeholder {
  color: #a3a3a3;
}
.apps {
  display: flex;
  gap: 1px;
}
.apps button {
  position: relative;
  width: 61px;
}
.apps button:first-child {
  width: 62px;
}
.running::after {
  content: "";
  position: absolute;
  right: 5px;
  bottom: 0;
  left: 5px;
  height: 3px;
  background: #ff93d2;
}
.many::after {
  background: linear-gradient(to right, #ff93d2 40px, #c572a3 40px);
}
.current {
  background: #333;
}
.current::after {
  right: 0;
  left: 0;
}
.tray {
  display: flex;
  margin-left: auto;
}
.tray button {
  width: 40px;
}
.tray .clock {
  flex-direction: column;
  width: 84px;
  font-size: 15px;
  line-height: 22px;
}
.tray button:last-child {
  width: 50px;
}
.show-desktop {
  width: 6px;
  margin-left: 10px;
  border-left: 1px solid #666;
}
```
